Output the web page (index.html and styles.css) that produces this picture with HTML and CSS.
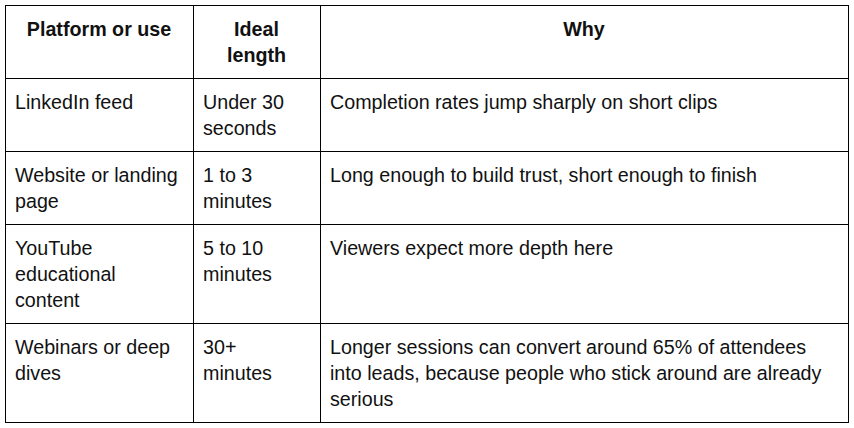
FILE: index.html
```html
<!DOCTYPE html>
<html>
<head>
<meta charset="utf-8">
<link rel="stylesheet" href="styles.css">
</head>
<body>
<table class="lengths">
  <colgroup>
    <col class="c1"><col class="c2"><col class="c3">
  </colgroup>
  <thead>
    <tr><th>Platform or use</th><th>Ideal length</th><th>Why</th></tr>
  </thead>
  <tbody>
    <tr><td>LinkedIn feed</td><td>Under 30 seconds</td><td>Completion rates jump sharply on short clips</td></tr>
    <tr><td>Website or landing page</td><td>1 to 3 minutes</td><td>Long enough to build trust, short enough to finish</td></tr>
    <tr><td>YouTube educational content</td><td>5 to 10 minutes</td><td>Viewers expect more depth here</td></tr>
    <tr><td>Webinars or deep dives</td><td>30+ minutes</td><td>Longer sessions can convert around 65% of attendees into leads, because people who stick around are already serious</td></tr>
  </tbody>
</table>
</body>
</html>
```
FILE: styles.css
```css
html, body {
  margin: 0;
  background: #fff;
}
body {
  padding: 5px;
  font-family: "Liberation Sans", Arial, sans-serif;
  font-size: 19.7px;
  line-height: 26px;
  color: #111;
}
.lengths {
  border-collapse: collapse;
  table-layout: fixed;
  width: 843px;
}
.c1 { width: 188px; }
.c2 { width: 127px; }
.c3 { width: 528px; }
.lengths th,
.lengths td {
  border: 1px solid #000;
  padding: 10px 10px 10px 9px;
  vertical-align: top;
  text-align: left;
}
.lengths th {
  font-weight: bold;
  text-align: center;
}
```
